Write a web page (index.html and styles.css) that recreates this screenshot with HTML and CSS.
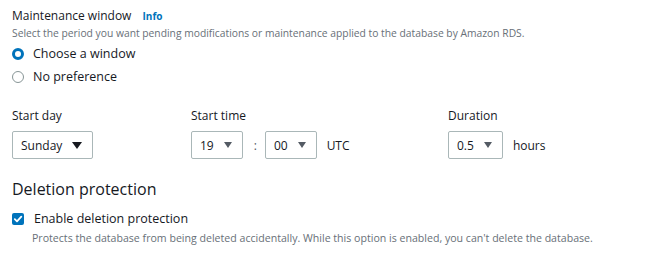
FILE: index.html
```html
<!DOCTYPE HTML>
<html>
<head>
  <meta charset="UTF-8">
  <title>Maintenance</title>
  <link rel="stylesheet" href="styles.css">
</head>
<body>
  <div class="section">
    <div class="field-title">Maintenance window <a class="info" href="#">Info</a></div>
    <div class="desc">Select the period you want pending modifications or maintenance applied to the database by Amazon RDS.</div>
    <label class="radio-row"><span class="radio checked"></span>Choose a window</label>
    <label class="radio-row"><span class="radio"></span>No preference</label>

    <div class="window-row">
      <div class="col col-day">
        <div class="label">Start day</div>
        <div class="controls">
          <div class="select wide">Sunday
            <svg class="caret" width="10" height="7" viewBox="0 0 10 7"><path d="M0 0 H10 L5 7 Z" fill="#16191f"/></svg>
          </div>
        </div>
      </div>
      <div class="col col-time">
        <div class="label">Start time</div>
        <div class="controls">
          <div class="select">19
            <svg class="caret" width="8" height="6" viewBox="0 0 8 6"><path d="M0 0 H8 L4 6 Z" fill="#545b64"/></svg>
          </div>
          <span class="sep">:</span>
          <div class="select">00
            <svg class="caret" width="8" height="6" viewBox="0 0 8 6"><path d="M0 0 H8 L4 6 Z" fill="#545b64"/></svg>
          </div>
          <span class="unit">UTC</span>
        </div>
      </div>
      <div class="col col-dur">
        <div class="label">Duration</div>
        <div class="controls">
          <div class="select">0.5
            <svg class="caret" width="8" height="6" viewBox="0 0 8 6"><path d="M0 0 H8 L4 6 Z" fill="#545b64"/></svg>
          </div>
          <span class="unit">hours</span>
        </div>
      </div>
    </div>
  </div>

  <div class="section">
    <h3>Deletion protection</h3>
    <label class="check-row"><span class="checkbox">
      <svg width="10" height="10" viewBox="0 0 10 10"><path d="M1.8 5.2 L4 7.3 L8.3 2.6" fill="none" stroke="#fff" stroke-width="1.8" stroke-linecap="round" stroke-linejoin="round"/></svg>
    </span>Enable deletion protection</label>
    <div class="desc indent">Protects the database from being deleted accidentally. While this option is enabled, you can't delete the database.</div>
  </div>
</body>
</html>
```

FILE: styles.css
```css
body {
  margin: 0;
  padding: 8px 12px;
  font-family: "Open Sans", "Noto Sans", sans-serif;
  color: #16191f;
  background: #fff;
}

.field-title {
  font-size: 12px;
  line-height: 15px;
}

.info {
  color: #0073bb;
  font-weight: 700;
  font-size: 10px;
  text-decoration: none;
  margin-left: 8px;
}

.desc {
  font-size: 10.3px;
  color: #687078;
  line-height: 14px;
  margin-top: 2px;
}

.desc.indent {
  font-size: 10.6px;
  margin-left: 20px;
  margin-top: 4px;
}

.radio-row, .check-row {
  display: flex;
  align-items: center;
  font-size: 12.5px;
  line-height: 16px;
  gap: 9px;
}

.radio-row { margin-top: 6px; }
.radio-row + .radio-row { margin-top: 7px; }

.radio {
  width: 10px;
  height: 10px;
  border: 1.5px solid #879596;
  border-radius: 50%;
  box-sizing: content-box;
  flex: none;
}

.radio.checked {
  border: 3.5px solid #0073bb;
  width: 6px;
  height: 6px;
}

.checkbox {
  width: 12px;
  height: 12px;
  background: #0073bb;
  border-radius: 2px;
  display: flex;
  align-items: center;
  justify-content: center;
  flex: none;
}

.check-row { gap: 10px; }

.window-row {
  display: flex;
  margin-top: 23px;
}

.col-day { width: 179px; }
.col-time { width: 257px; }

.label {
  font-size: 12px;
  line-height: 16px;
  margin-bottom: 7px;
}

.controls {
  display: flex;
  align-items: center;
}

.select {
  display: flex;
  align-items: center;
  height: 26px;
  border: 1px solid #aab7b8;
  border-radius: 2px;
  padding: 0 10px 0 8px;
  font-size: 12px;
  gap: 10px;
}

.select.wide { padding-right: 10px; gap: 10px; }

.sep {
  margin: 0 8px 0 11px;
  font-size: 12px;
  color: #545b64;
}

.unit {
  margin-left: 10px;
  font-size: 12px;
}

h3 {
  font-size: 16px;
  font-weight: 400;
  margin: 20px 0 12px;
  line-height: 20px;
}
```
